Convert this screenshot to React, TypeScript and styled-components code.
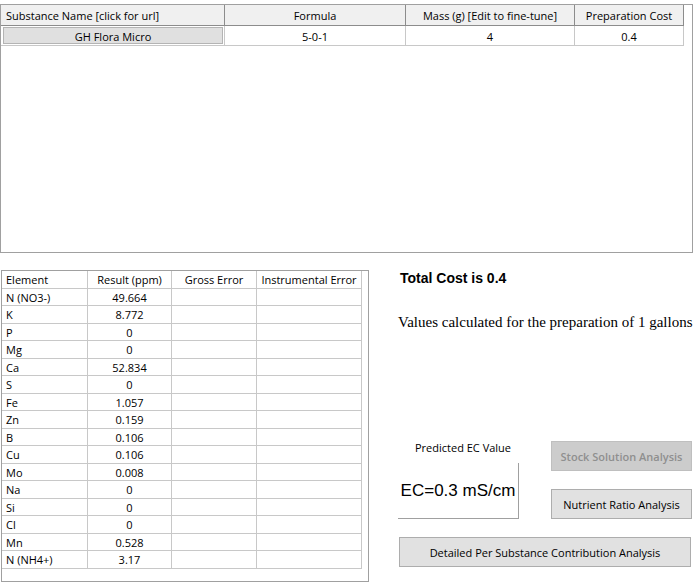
import React from "react";
import styled, { createGlobalStyle } from "styled-components";

const Global = createGlobalStyle`
  html, body { margin: 0; padding: 0; background: #ffffff; }
  body { font-family: "Open Sans", "Noto Sans", sans-serif; color: #000; }
`;

const Page = styled.div`
  width: 698px;
  height: 582px;
  display: flex;
  flex-direction: column;
  padding-top: 4px;
  box-sizing: border-box;
`;

const TopPanel = styled.div`
  width: 693px;
  height: 249px;
  box-sizing: border-box;
  border: 1px solid #a0a0a0;
  background: #fff;
`;

const TopGrid = styled.div`
  display: grid;
  grid-template-columns: 224px 181px 169px 109px;
  width: 683px;
`;

const HeadCell = styled.div<{ $left?: boolean }>`
  height: 21px;
  box-sizing: border-box;
  background: #f0f0f0;
  border-right: 1px solid #8c8c8c;
  border-bottom: 1px solid #8c8c8c;
  font-size: 11px;
  line-height: 22px;
  text-align: ${(p) => (p.$left ? "left" : "center")};
  padding-left: ${(p) => (p.$left ? "5px" : "0")};
  white-space: nowrap;
  &:last-child { border-right: 1px solid #c8c8c8; }
`;

const DataCell = styled.div`
  height: 20px;
  box-sizing: border-box;
  border-right: 1px solid #c8c8c8;
  border-bottom: 1px solid #c8c8c8;
  font-size: 11px;
  line-height: 21px;
  text-align: center;
`;

const SelectedCell = styled.div`
  height: 20px;
  box-sizing: border-box;
  border-right: 1px solid #c8c8c8;
  border-bottom: 1px solid #c8c8c8;
  padding: 1px 1px 1px 2px;
`;

const SelectedInner = styled.div`
  height: 17px;
  box-sizing: border-box;
  background: #e0e0e0;
  border: 1px solid #b4b4b4;
  font-size: 11px;
  line-height: 17px;
  text-align: center;
`;

const Lower = styled.div`
  display: flex;
  margin-top: 17px;
`;

const ResultPanel = styled.div`
  width: 368px;
  height: 312px;
  box-sizing: border-box;
  border: 1px solid #a0a0a0;
  margin-left: 1px;
  background: #fff;
`;

const ResultGrid = styled.div`
  display: grid;
  grid-template-columns: 86px 84px 85px 105px;
  grid-auto-rows: 17.5px;
  width: 360px;
`;

const RCell = styled.div<{ $left?: boolean }>`
  box-sizing: border-box;
  border-right: 1px solid #c8c8c8;
  border-bottom: 1px solid #c8c8c8;
  font-size: 11px;
  line-height: 17.5px;
  text-align: ${(p) => (p.$left ? "left" : "center")};
  padding-left: ${(p) => (p.$left ? "4px" : "0")};
  white-space: nowrap;
`;

const Side = styled.div`
  display: flex;
  flex-direction: column;
  padding-left: 29px;
  flex: 1;
`;

const TotalCost = styled.div`
  font-family: "Liberation Sans", Arial, sans-serif;
  font-weight: bold;
  font-size: 14px;
  line-height: 16px;
  margin-top: 0px;
  padding-left: 2px;
`;

const Values = styled.div`
  font-family: "Liberation Serif", "Times New Roman", serif;
  font-size: 15px;
  line-height: 18px;
  margin-top: 27px;
  white-space: nowrap;
`;

const Controls = styled.div`
  display: flex;
  gap: 32px;
  margin-top: 110px;
`;

const ECColumn = styled.div`
  display: flex;
  flex-direction: column;
  width: 121px;
`;

const ECLabel = styled.div`
  font-size: 11px;
  line-height: 14px;
  text-align: center;
  padding-left: 9px;
`;

const ECBox = styled.div`
  margin-top: 8px;
  height: 56px;
  box-sizing: border-box;
  border-right: 1px solid #a0a0a0;
  border-bottom: 1px solid #a0a0a0;
  background: #fff;
  font-family: "Liberation Sans", Arial, sans-serif;
  font-size: 17px;
  line-height: 55px;
  text-align: center;
`;

const ButtonColumn = styled.div`
  display: flex;
  flex-direction: column;
  gap: 18px;
`;

const Button = styled.button<{ $width: number; $disabled?: boolean }>`
  width: ${(p) => p.$width}px;
  height: 30px;
  box-sizing: border-box;
  margin: 0;
  padding: 0;
  background: ${(p) => (p.$disabled ? "#cccccc" : "#e1e1e1")};
  border: 1px solid ${(p) => (p.$disabled ? "#bfbfbf" : "#adadad")};
  color: ${(p) => (p.$disabled ? "#8f8f8f" : "#000")};
  font-family: "Open Sans", "Noto Sans", sans-serif;
  font-size: 11px;
  font-weight: ${(p) => (p.$disabled ? 600 : 400)};
  cursor: default;
`;

const WideButton = styled(Button)`
  margin-top: 18px;
  margin-left: 1px;
`;

const rows: [string, string][] = [
  ["N (NO3-)", "49.664"],
  ["K", "8.772"],
  ["P", "0"],
  ["Mg", "0"],
  ["Ca", "52.834"],
  ["S", "0"],
  ["Fe", "1.057"],
  ["Zn", "0.159"],
  ["B", "0.106"],
  ["Cu", "0.106"],
  ["Mo", "0.008"],
  ["Na", "0"],
  ["Si", "0"],
  ["Cl", "0"],
  ["Mn", "0.528"],
  ["N (NH4+)", "3.17"],
];

export default function App() {
  return (
    <Page>
      <Global />
      <TopPanel>
        <TopGrid>
          <HeadCell $left>Substance Name [click for url]</HeadCell>
          <HeadCell>Formula</HeadCell>
          <HeadCell>Mass (g) [Edit to fine-tune]</HeadCell>
          <HeadCell>Preparation Cost</HeadCell>
          <SelectedCell>
            <SelectedInner>GH Flora Micro</SelectedInner>
          </SelectedCell>
          <DataCell>5-0-1</DataCell>
          <DataCell>4</DataCell>
          <DataCell>0.4</DataCell>
        </TopGrid>
      </TopPanel>
      <Lower>
        <ResultPanel>
          <ResultGrid>
            <RCell $left>Element</RCell>
            <RCell>Result (ppm)</RCell>
            <RCell>Gross Error</RCell>
            <RCell>Instrumental Error</RCell>
            {rows.map(([el, v]) => (
              <React.Fragment key={el}>
                <RCell $left>{el}</RCell>
                <RCell>{v}</RCell>
                <RCell />
                <RCell />
              </React.Fragment>
            ))}
          </ResultGrid>
        </ResultPanel>
        <Side>
          <TotalCost>Total Cost is 0.4</TotalCost>
          <Values>Values calculated for the preparation of 1 gallons</Values>
          <Controls>
            <ECColumn>
              <ECLabel>Predicted EC Value</ECLabel>
              <ECBox>EC=0.3 mS/cm</ECBox>
            </ECColumn>
            <ButtonColumn>
              <Button $width={141} $disabled>Stock Solution Analysis</Button>
              <Button $width={141}>Nutrient Ratio Analysis</Button>
            </ButtonColumn>
          </Controls>
          <WideButton $width={292}>Detailed Per Substance Contribution Analysis</WideButton>
        </Side>
      </Lower>
    </Page>
  );
}
